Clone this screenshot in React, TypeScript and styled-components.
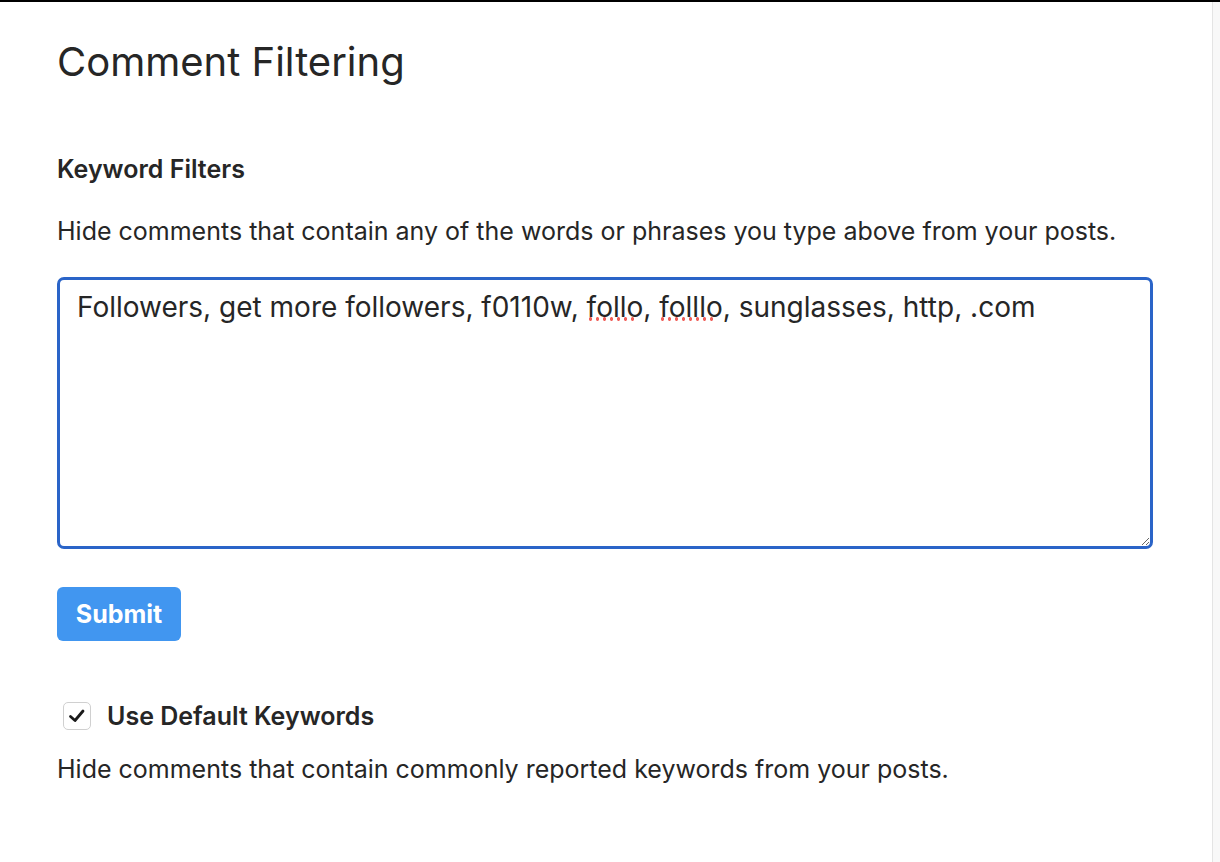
import React from "react";
import styled, { createGlobalStyle } from "styled-components";

const Global = createGlobalStyle`
  html, body { margin: 0; padding: 0; background: #fff; }
  body { font-family: Inter, "Liberation Sans", Arial, sans-serif; color: #262626; }
  * { box-sizing: border-box; }
`;

const Page = styled.div`
  display: flex;
  height: 862px;
  border-top: 2px solid #000;
  overflow: hidden;
`;

const Main = styled.main`
  flex: 1;
  display: flex;
  flex-direction: column;
  align-items: flex-start;
  padding: 0 0 0 57px;
`;

const Scrollbar = styled.div`
  width: 8px;
  background: #f8f8f8;
  border-left: 1px solid #e4e4e4;
`;

const Title = styled.h1`
  margin: 36px 0 0;
  font-size: 40px;
  font-weight: 400;
  line-height: 48px;
  color: #262626;
`;

const SectionTitle = styled.h2`
  margin: 68px 0 0;
  font-size: 25px;
  font-weight: 600;
  line-height: 30px;
`;

const Help = styled.p<{ $top: number }>`
  margin: ${(p) => p.$top}px 0 0;
  font-size: 25px;
  line-height: 30px;
  font-weight: 400;
`;

const AreaWrap = styled.div`
  position: relative;
  margin-top: 31px;
  display: flex;
`;

const Area = styled.textarea`
  width: 1096px;
  height: 272px;
  border: 3px solid #2a64c8;
  border-radius: 7px;
  padding: 9px 17px;
  font-family: Inter, "Liberation Sans", Arial, sans-serif;
  font-size: 28px;
  line-height: 36px;
  color: #262626;
  outline: none;
  resize: both;
`;

const Squiggle = styled.span<{ $left: number; $width: number }>`
  position: absolute;
  top: 40px;
  left: ${(p) => p.$left}px;
  width: ${(p) => p.$width}px;
  height: 4px;
  pointer-events: none;
  background-image: radial-gradient(circle, #f0605a 1.6px, transparent 2px);
  background-size: 7px 4px;
  background-repeat: repeat-x;
`;

const Submit = styled.button`
  margin-top: 38px;
  width: 124px;
  height: 54px;
  border: none;
  border-radius: 6px;
  background: #4196f0;
  color: #fff;
  font-family: Inter, "Liberation Sans", Arial, sans-serif;
  font-size: 25px;
  font-weight: 700;
  cursor: pointer;
`;

const CheckRow = styled.label`
  margin-top: 60px;
  margin-left: 6px;
  display: flex;
  align-items: center;
  gap: 16px;
  font-size: 25px;
  font-weight: 600;
  line-height: 30px;
`;

const Box = styled.span`
  width: 28px;
  height: 28px;
  border: 1px solid #d0d0d0;
  border-radius: 5px;
  display: flex;
  align-items: center;
  justify-content: center;
  background: #fff;
`;

export default function App() {
  return (
    <>
      <Global />
      <Page>
        <Main>
          <Title>Comment Filtering</Title>
          <SectionTitle>Keyword Filters</SectionTitle>
          <Help $top={32}>
            Hide comments that contain any of the words or phrases you type above from your posts.
          </Help>
          <AreaWrap>
            <Area
              defaultValue="Followers, get more followers, f0110w, follo, folllo, sunglasses, http, .com"
              spellCheck={false}
            />
            <Squiggle $left={530} $width={49} />
            <Squiggle $left={602} $width={56} />
          </AreaWrap>
          <Submit>Submit</Submit>
          <CheckRow>
            <Box>
              <svg width="20" height="20" viewBox="0 0 20 20">
                <path d="M3.5 10.5 L8 14.5 L16 5" fill="none" stroke="#1a1a1a" strokeWidth="2.8" strokeLinecap="round" strokeLinejoin="round" />
              </svg>
            </Box>
            Use Default Keywords
          </CheckRow>
          <Help $top={23}>Hide comments that contain commonly reported keywords from your posts.</Help>
        </Main>
        <Scrollbar />
      </Page>
    </>
  );
}
